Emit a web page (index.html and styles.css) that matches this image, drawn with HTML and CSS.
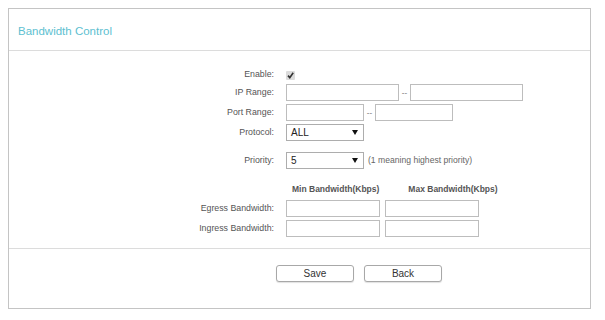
FILE: index.html
```html
<!DOCTYPE html>
<html>
<head>
<meta charset="utf-8">
<link rel="stylesheet" href="styles.css">
</head>
<body>
<div class="panel">
  <div class="panel-head"><h1 class="title">Bandwidth Control</h1></div>
  <div class="panel-body">
    <div class="row row-enable">
      <label class="lbl">Enable:</label>
      <div class="fld"><span class="check"><svg width="9" height="9" viewBox="0 0 9 9"><path d="M2 4.6 L3.8 6.6 L7.2 1.8" fill="none" stroke="#333" stroke-width="1.6"/></svg></span></div>
    </div>
    <div class="row">
      <label class="lbl">IP Range:</label>
      <div class="fld"><span class="inp w-ip"></span><span class="dash">--</span><span class="inp w-ip"></span></div>
    </div>
    <div class="row">
      <label class="lbl">Port Range:</label>
      <div class="fld"><span class="inp w-port"></span><span class="dash">--</span><span class="inp w-port"></span></div>
    </div>
    <div class="row">
      <label class="lbl">Protocol:</label>
      <div class="fld"><span class="sel"><span class="sel-val">ALL</span><span class="arrow"></span></span></div>
    </div>
    <div class="row row-priority">
      <label class="lbl">Priority:</label>
      <div class="fld"><span class="sel"><span class="sel-val">5</span><span class="arrow"></span></span><span class="hint">(1 meaning highest priority)</span></div>
    </div>
    <div class="row row-head">
      <span class="lbl"></span>
      <div class="fld"><span class="colhead colhead-min">Min Bandwidth(Kbps)</span><span class="colhead colhead-max">Max Bandwidth(Kbps)</span></div>
    </div>
    <div class="row">
      <label class="lbl">Egress Bandwidth:</label>
      <div class="fld"><span class="inp w-bw"></span><span class="inp w-bw"></span></div>
    </div>
    <div class="row">
      <label class="lbl">Ingress Bandwidth:</label>
      <div class="fld"><span class="inp w-bw"></span><span class="inp w-bw"></span></div>
    </div>
  </div>
  <div class="panel-foot">
    <button class="btn">Save</button>
    <button class="btn">Back</button>
  </div>
</div>
</body>
</html>
```
FILE: styles.css
```css
* { box-sizing: border-box; }
html, body { margin: 0; padding: 0; background: #fff; }
body {
  padding: 8px 14px 0 8px;
  font-family: "Liberation Sans", Arial, sans-serif;
  font-size: 9px;
  color: #555;
}
.panel {
  width: 583px;
  height: 301px;
  border: 1px solid #c4c4c4;
  display: flex;
  flex-direction: column;
}
.panel-head {
  height: 42px;
  border-bottom: 1px solid #dcdcdc;
  display: flex;
  align-items: center;
  padding-left: 9px;
}
.title {
  margin: 0;
  font-size: 11.5px;
  font-weight: normal;
  color: #5dbfd1;
  padding-top: 2px;
}
.panel-body {
  padding-top: 15px;
  height: 198px;
  border-bottom: 1px solid #dcdcdc;
}
.row {
  display: grid;
  grid-template-columns: 265px auto;
  column-gap: 12px;
  align-items: center;
  height: 20px;
}
.row-enable { height: 16px; }
.row-priority { margin-top: 8px; }
.row-head { margin-top: 10px; height: 18px; }
.lbl { text-align: right; color: #555; font-size: 8.8px; }
.fld { display: flex; align-items: center; }
.inp {
  display: inline-block;
  height: 17px;
  border: 1px solid #bdbdbd;
  background: #fff;
}
.w-ip { width: 113px; }
.w-port { width: 78px; }
.w-bw { width: 94px; }
.w-bw + .w-bw { margin-left: 5px; }
.dash { width: 11px; text-align: center; color: #666; font-size: 8px; }
.check {
  display: inline-block;
  width: 9px;
  height: 9px;
  background: #dcdcdc;
  border-radius: 1px;
  margin-top: 2px;
}
.check svg { display: block; }
.sel {
  display: inline-flex;
  align-items: center;
  justify-content: space-between;
  width: 78px;
  height: 17px;
  border: 1px solid #adadad;
  padding: 0 5px 0 4px;
  background: #fff;
}
.sel-val { color: #222; font-size: 10px; }
.arrow {
  width: 0; height: 0;
  border-left: 3px solid transparent;
  border-right: 3px solid transparent;
  border-top: 5px solid #111;
}
.hint { margin-left: 4px; color: #666; font-size: 8.6px; }
.colhead {
  font-size: 8.5px;
  font-weight: bold;
  color: #555;
  white-space: nowrap;
}
.colhead-min { margin-left: 6px; }
.colhead-max { margin-left: 29px; }
.panel-foot {
  display: flex;
  padding: 16px 0 0 267px;
  gap: 10px;
}
.btn {
  width: 78px;
  height: 17px;
  border: 1px solid #a8a8a8;
  border-radius: 3px;
  background: #fff;
  box-shadow: 0 1px 1px rgba(0,0,0,0.12);
  font-family: "Liberation Sans", Arial, sans-serif;
  font-size: 10px;
  color: #333;
  padding: 0;
}
```
